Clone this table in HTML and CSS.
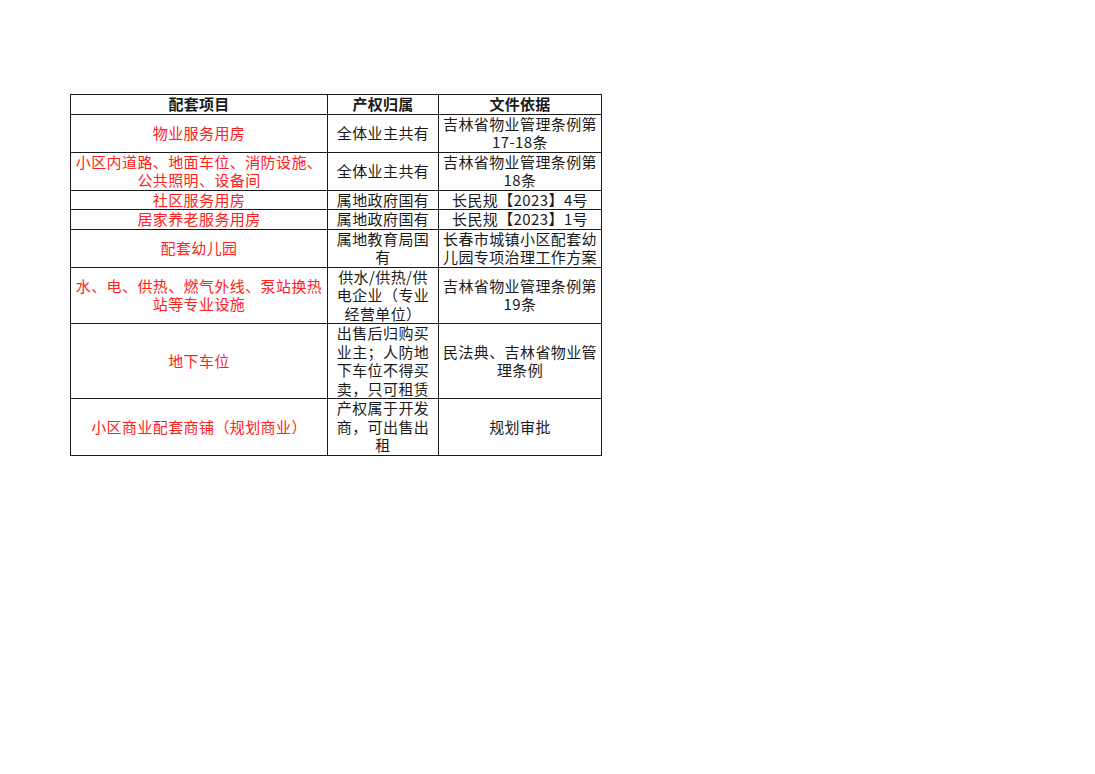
FILE: index.html
```html
<!DOCTYPE html>
<html lang="zh-CN">
<head>
<meta charset="utf-8">
<title>配套项目</title>
<link rel="stylesheet" href="styles.css">
</head>
<body>
<div class="page">
  <table class="sheet">
    <colgroup>
      <col class="c1"><col class="c2"><col class="c3">
    </colgroup>
    <thead>
      <tr class="h1"><th>配套项目</th><th>产权归属</th><th>文件依据</th></tr>
    </thead>
    <tbody>
      <tr class="h2"><td class="red">物业服务用房</td><td>全体业主共有</td><td>吉林省物业管理条例第 17-18条</td></tr>
      <tr class="h2"><td class="red">小区内道路、地面车位、消防设施、公共照明、设备间</td><td>全体业主共有</td><td>吉林省物业管理条例第 18条</td></tr>
      <tr class="h1"><td class="red">社区服务用房</td><td>属地政府国有</td><td>长民规【2023】4号</td></tr>
      <tr class="h1"><td class="red">居家养老服务用房</td><td>属地政府国有</td><td>长民规【2023】1号</td></tr>
      <tr class="h2"><td class="red">配套幼儿园</td><td>属地教育局国<br>有</td><td>长春市城镇小区配套幼儿园专项治理工作方案</td></tr>
      <tr class="h3"><td class="red">水、电、供热、燃气外线、泵站换热站等专业设施</td><td>供水/供热/供<br>电企业（专业<br>经营单位）</td><td>吉林省物业管理条例第 19条</td></tr>
      <tr class="h4"><td class="red">地下车位</td><td>出售后归购买<br>业主；人防地<br>下车位不得买<br>卖，只可租赁</td><td>民法典、吉林省物业管理条例</td></tr>
      <tr class="h3"><td class="red">小区商业配套商铺（规划商业）</td><td>产权属于开发<br>商，可出售出<br>租</td><td>规划审批</td></tr>
    </tbody>
  </table>
</div>
</body>
</html>
```
FILE: styles.css
```css
html, body {
  margin: 0;
  padding: 0;
  background: #ffffff;
}
.page {
  padding: 94px 0 0 70px;
}
.sheet {
  border-collapse: collapse;
  table-layout: fixed;
  width: 531px;
  font-family: "Noto Sans CJK SC", sans-serif;
  font-size: 15px;
  line-height: 18.5px;
  letter-spacing: 0.4px;
  color: #1a1a1a;
}
.c1 { width: 257px; }
.c2 { width: 111px; }
.c3 { width: 163px; }
.sheet th,
.sheet td {
  border: 1px solid #1a1a1a;
  padding: 0 2px;
  text-align: center;
  vertical-align: middle;
  overflow: hidden;
}
.sheet th {
  font-weight: bold;
  letter-spacing: 0.2px;
}
.sheet .red {
  color: #ff2020;
}
.h1 { height: 18px; }
.h2 { height: 37px; }
.h3 { height: 56px; }
.h4 { height: 75px; }
```
